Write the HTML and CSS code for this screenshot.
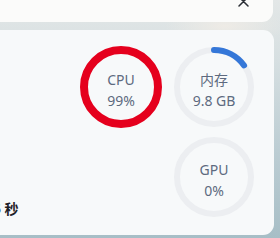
FILE: index.html
```html
<!DOCTYPE html>
<html lang="zh-CN">
<head>
<meta charset="utf-8">
<title>监控</title>
<link rel="stylesheet" href="styles.css">
</head>
<body>
<div class="stack">
  <div class="card card-top">
    <button class="close" aria-label="关闭">
      <svg width="11" height="11" viewBox="0 0 11 11"><path d="M1 1 L10 10 M10 1 L1 10" stroke="#2b2f36" stroke-width="1.5" stroke-linecap="round" fill="none"/></svg>
    </button>
  </div>
  <div class="card card-main">
    <div class="left">
      <div class="interval">0.5 秒</div>
    </div>
    <div class="rings">
      <div class="ring ring-cpu">
        <svg width="82" height="82" viewBox="0 0 82 82"><circle cx="41" cy="41" r="37" fill="none" stroke="#e5001d" stroke-width="8"/></svg>
        <div class="label"><span>CPU</span><span>99%</span></div>
      </div>
      <div class="ring ring-mem">
        <svg width="80" height="80" viewBox="0 0 80 80"><circle cx="40" cy="40" r="37" fill="none" stroke="#eceef1" stroke-width="6"/><circle class="arc" cx="40" cy="40" r="37" fill="none" stroke="#3577d8" stroke-width="6" stroke-linecap="round" stroke-dasharray="35 240"/></svg>
        <div class="label"><span>内存</span><span>9.8 GB</span></div>
      </div>
      <div class="ring ring-gpu">
        <svg width="80" height="80" viewBox="0 0 80 80"><circle cx="40" cy="40" r="37" fill="none" stroke="#eceef1" stroke-width="6"/></svg>
        <div class="label"><span>GPU</span><span>0%</span></div>
      </div>
    </div>
  </div>
</div>
</body>
</html>
```
FILE: styles.css
```css
html, body {
  margin: 0;
  padding: 0;
}
body {
  width: 280px;
  height: 238px;
  overflow: hidden;
  font-family: "Noto Sans", "Noto Sans CJK SC", sans-serif;
  background:
    radial-gradient(ellipse 60px 20px at 225px 26px, rgba(240, 236, 230, 0.9), rgba(240, 236, 230, 0) 100%),
    linear-gradient(to bottom, #e3e7e7 0px, #d6dfe1 60px, #bccdd3 150px, #a7bec6 238px);
}
.stack {
  display: flex;
  flex-direction: column;
  gap: 8px;
  margin: -20px 6px 0 -20px;
}
.card {
  border-radius: 11px;
}
.card-top {
  height: 42px;
  margin-right: 1px;
  background: #fbfbfa;
  display: flex;
  justify-content: flex-end;
  align-items: center;
  padding-right: 24px;
  box-sizing: border-box;
}
.close {
  border: 0;
  background: none;
  padding: 0;
  width: 11px;
  height: 11px;
  display: block;
  margin-top: 1px;
}
.close svg {
  display: block;
}
.card-main {
  height: 205px;
  box-sizing: border-box;
  background: #f7f9fa;
  display: flex;
  padding: 16px 20px 18px 0;
}
.left {
  flex: 1;
  display: flex;
  flex-direction: column;
  justify-content: flex-end;
  min-width: 0;
}
.interval {
  margin-left: 1px;
  margin-bottom: -2px;
  font-size: 14px;
  line-height: 20px;
  font-weight: 700;
  color: #1d2026;
  white-space: nowrap;
}
.rings {
  display: grid;
  grid-template-columns: 82px 80px;
  grid-template-rows: 82px 80px;
  column-gap: 12px;
  row-gap: 9px;
}
.ring {
  display: grid;
  place-items: center;
}
.ring > * {
  grid-area: 1 / 1;
}
.ring svg {
  display: block;
}
.ring-cpu {
  grid-column: 1;
  grid-row: 1;
}
.ring-mem {
  grid-column: 2;
  grid-row: 1;
}
.ring-gpu {
  grid-column: 2;
  grid-row: 2;
}
.arc {
  transform: rotate(-90deg);
  transform-origin: 40px 40px;
}
.label {
  display: flex;
  flex-direction: column;
  align-items: center;
  font-size: 14px;
  line-height: 21px;
  color: #5d6a7f;
  padding-top: 5px;
}
```
